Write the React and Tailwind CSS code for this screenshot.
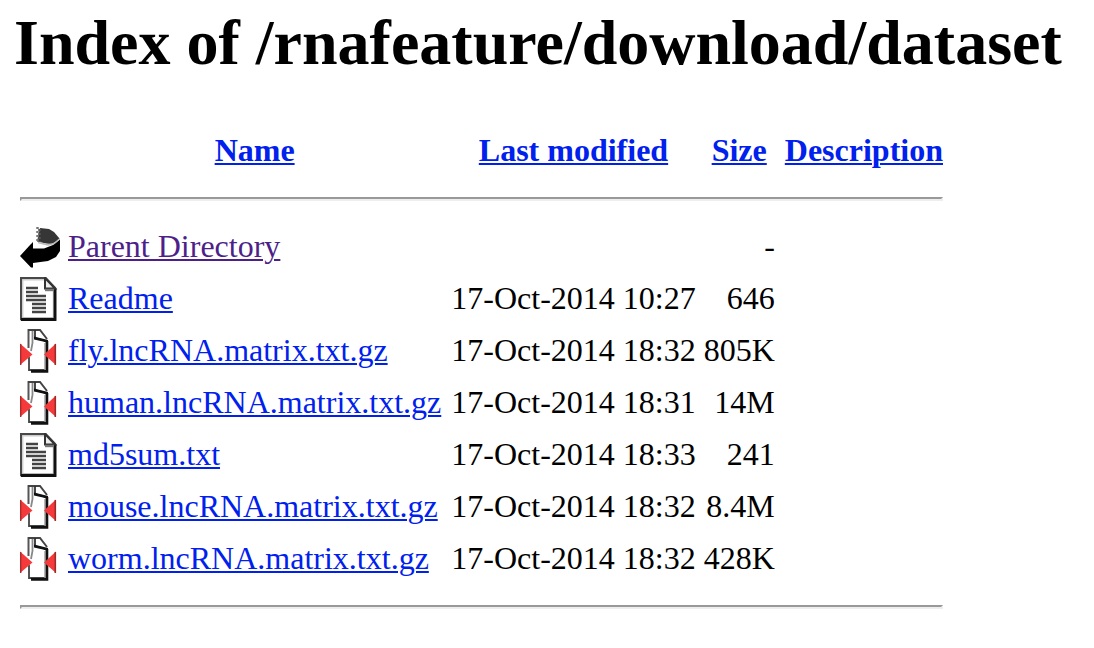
function BackIcon() {
  return (
    <svg viewBox="0 0 40 44" className="block h-11 w-10" role="img" aria-label="Parent directory">
      <path d="M0 31 L10.500 19.500 L13 17 V23.500 H24 L33 20 L40 14.500 V26 L36 32 L28 36 L13 38 V42.500 H11z" fill="#000" />
      <path d="M20 3 L29 4 L34 7 L39.500 13.500 L37 16 L32 19 L26 18.500 L17 16.500z" fill="#363636" />
      <path d="M17.500 2 V17" stroke="#777" strokeWidth="2.500" strokeDasharray="2 2" />
      <path d="M19.500 4 V17" stroke="#555" strokeWidth="2.500" strokeDasharray="2 2" />
      <path d="M18 17.500 L28 20 L34 18.500 L39.500 14" fill="none" stroke="#bbb" strokeWidth="1.400" />
    </svg>
  );
}

function TextIcon() {
  return (
    <svg viewBox="0 0 40 44" className="block h-11 w-10" role="img" aria-label="Text file">
      <path d="M1 1 H25.500 L35 11 V42 H1z" fill="#fff" stroke="#484848" strokeWidth="2.400" />
      <path d="M2.800 41 V2.800 H24" fill="none" stroke="#ccc" strokeWidth="1.200" />
      <path d="M33.400 13 V40.500 H2" fill="none" stroke="#bbb" strokeWidth="1.200" />
      <path d="M35 11 V42.500 H1" fill="none" stroke="#111" strokeWidth="2.800" />
      <path d="M25 1 V11.500 H35z" fill="#eee" stroke="#333" strokeWidth="2" />
      <path d="M25 13 H34" stroke="#777" strokeWidth="2.400" />
      <path d="M6 11 H18 M6 15 H18 M6 19 H26 M6 23 H26 M12 27 H26 M12 31 H26 M12 35 H26" stroke="#444" strokeWidth="2.400" />
    </svg>
  );
}

function CompressedIcon() {
  return (
    <svg viewBox="0 0 40 44" className="block h-11 w-10" role="img" aria-label="Compressed file">
      <path d="M9 1 H20 L27 10 V42 H9z" fill="#fff" />
      <path d="M8.500 0 V19" stroke="#555" strokeWidth="2" />
      <path d="M12.500 1 V14 L11 22" fill="none" stroke="#888" strokeWidth="1.800" />
      <path d="M8 1 H20 L27 10" fill="none" stroke="#444" strokeWidth="2" />
      <path d="M15 1 V9 L26 12" fill="none" stroke="#333" strokeWidth="1.800" />
      <path d="M14 7.500 L20 9 L28 11 V14 L23 12.500 L14 10.500z" fill="#111" />
      <path d="M9 28 V41 H25" fill="none" stroke="#444" strokeWidth="1.800" />
      <path d="M25 14 V41" stroke="#999" strokeWidth="1.400" />
      <path d="M27 12 V42.400 H11" fill="none" stroke="#111" strokeWidth="2.600" />
      <path d="M0 14.500 L12.500 25.500 L0 36z" fill="#f43a3a" />
      <path d="M0.700 15 V36" stroke="#b02a2a" strokeWidth="1.400" />
      <path d="M36 14.500 L24 25.500 L36 36z" fill="#f43a3a" />
      <path d="M35.300 15 V36" stroke="#a02828" strokeWidth="1.600" />
    </svg>
  );
}

const icons = { back: BackIcon, text: TextIcon, compressed: CompressedIcon };

const entries = [
  { icon: "back", name: "Parent Directory", modified: "", size: "-", visited: true },
  { icon: "text", name: "Readme", modified: "17-Oct-2014 10:27", size: "646" },
  { icon: "compressed", name: "fly.lncRNA.matrix.txt.gz", modified: "17-Oct-2014 18:32", size: "805K" },
  { icon: "compressed", name: "human.lncRNA.matrix.txt.gz", modified: "17-Oct-2014 18:31", size: "14M" },
  { icon: "text", name: "md5sum.txt", modified: "17-Oct-2014 18:33", size: "241" },
  { icon: "compressed", name: "mouse.lncRNA.matrix.txt.gz", modified: "17-Oct-2014 18:32", size: "8.4M" },
  { icon: "compressed", name: "worm.lncRNA.matrix.txt.gz", modified: "17-Oct-2014 18:32", size: "428K" },
];

function Link({ visited, children }) {
  return (
    <a
      href="#"
      className={`underline decoration-2 underline-offset-2 ${visited ? "text-[#4e1f8a]" : "text-[#0020ee]"}`}
    >
      {children}
    </a>
  );
}

function RuleRow() {
  return (
    <tr>
      <td colSpan={5} className="p-0.5">
        <hr className="my-4 h-1 border-2 border-t-[#999] border-r-[#eee] border-b-[#eee] border-l-[#999]" />
      </td>
    </tr>
  );
}

export default function App() {
  return (
    <main className="bg-white px-3.5 pt-[7px] pb-6 font-['Liberation_Serif',serif] text-[32px] leading-9 text-black">
      <h1 className="text-[64px] leading-[72px] font-bold">Index of /rnafeature/download/dataset</h1>
      <table className="mt-11 border-separate border-spacing-1 whitespace-nowrap">
        <thead>
          <tr className="h-12">
            <td className="p-0.5" />
            <th className="p-0.5 pr-1 pb-1"><Link>Name</Link></th>
            <th className="p-0.5 pb-1"><Link>Last modified</Link></th>
            <th className="p-0.5 pb-1"><Link>Size</Link></th>
            <th className="p-0.5 pb-1 pl-1"><Link>Description</Link></th>
          </tr>
        </thead>
        <tbody>
          <RuleRow />
          {entries.map((entry) => {
            const Icon = icons[entry.icon];
            return (
              <tr key={entry.name}>
                <td className="p-0.5"><Icon /></td>
                <td className="p-0.5 pr-1 pb-1"><Link visited={entry.visited}>{entry.name}</Link></td>
                <td className="p-0.5 pb-1 text-right">{entry.modified}</td>
                <td className="p-0.5 pb-1 text-right">{entry.size}</td>
                <td className="p-0.5" />
              </tr>
            );
          })}
          <RuleRow />
        </tbody>
      </table>
    </main>
  );
}
